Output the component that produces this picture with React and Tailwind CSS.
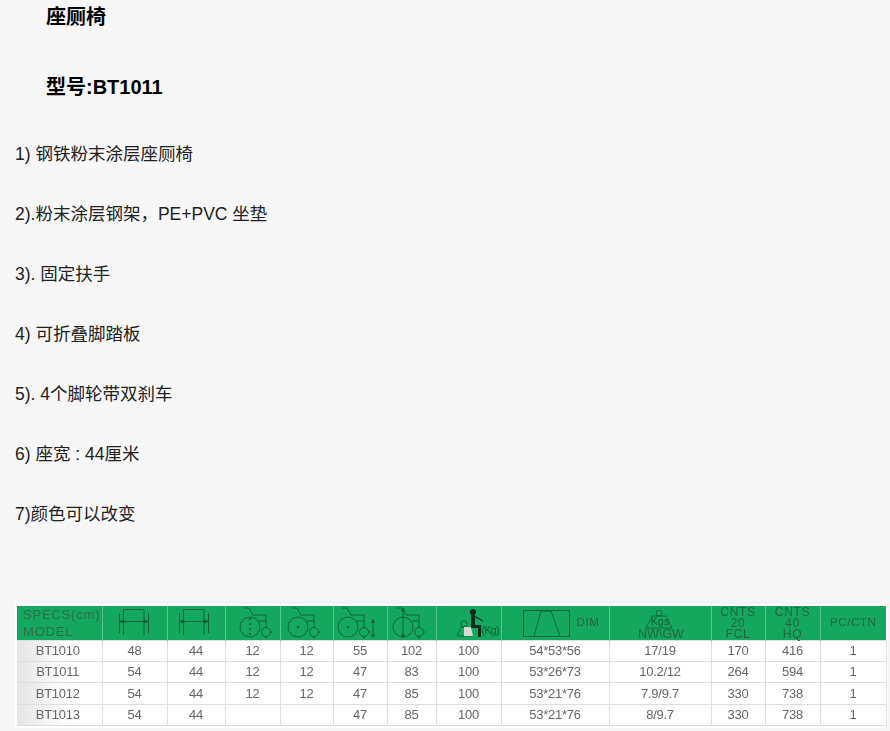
const features = [
  "1) 钢铁粉末涂层座厕椅",
  "2).粉末涂层钢架，PE+PVC 坐垫",
  "3). 固定扶手",
  "4) 可折叠脚踏板",
  "5). 4个脚轮带双刹车",
  "6) 座宽 : 44厘米",
  "7)颜色可以改变",
];

const rows = [
  ["BT1010", "48", "44", "12", "12", "55", "102", "100", "54*53*56", "17/19", "170", "416", "1"],
  ["BT1011", "54", "44", "12", "12", "47", "83", "100", "53*26*73", "10.2/12", "264", "594", "1"],
  ["BT1012", "54", "44", "12", "12", "47", "85", "100", "53*21*76", "7.9/9.7", "330", "738", "1"],
  ["BT1013", "54", "44", "", "", "47", "85", "100", "53*21*76", "8/9.7", "330", "738", "1"],
];

const rowHeights = ["h-[21px]", "h-[21px]", "h-[22px]", "h-[21px]"];

const SeatIcon = ({ className }) => (
  <svg width="30" height="28" viewBox="0 0 30 28" fill="none" stroke="#0f5c36" strokeWidth="0.9" className={`block ${className}`}>
    <path d="M4.5 0.5H25M4.5 0.5V26M25 0.5V26" />
    <path d="M0.5 4V24M29.5 4V24" />
    <path d="M1 12.5H29" />
    <path d="M1 12.5L5 11V14ZM29 12.5L25 11V14Z" fill="#0f5c36" />
  </svg>
);

const ChairIcon = ({ children, className, width = 34 }) => (
  <svg width={width} height="32" viewBox={`0 0 ${width} 32`} fill="none" stroke="#0f5c36" strokeWidth="0.9" className={`block ${className}`}>
    <path d="M5 1H10L14 8H27V21" />
    <path d="M20 14H27" />
    <circle cx="11" cy="20" r="10" />
    <circle cx="27" cy="25" r="4.5" />
    <path d="M31.5 25H33.5" />
    <path d="M27 29V31.5" strokeWidth="1.6" />
    {children}
  </svg>
);

const SitterIcon = () => (
  <svg width="30" height="30" viewBox="0 0 30 30" className="block" fill="none">
    <circle cx="9" cy="16" r="3.2" stroke="#0f5c36" strokeWidth="0.9" />
    <path d="M2 28L6 19H13L17 28Z" stroke="#0f5c36" strokeWidth="0.9" />
    <path d="M9 19H16L18 28H9Z" fill="#d5dbd6" />
    <circle cx="18" cy="4" r="3" fill="#0b2d1c" />
    <path d="M16 6.5H20V17H26V29H23V20H16Z" fill="#0b2d1c" />
    <path d="M19 8L28 13" stroke="#0b2d1c" strokeWidth="1.4" />
  </svg>
);

const HeaderStack = ({ lines }) => (
  <div className="flex flex-col items-center text-[12px] leading-[11px] tracking-[0.7px] text-[#26613f]">
    {lines.map((line) => (
      <span key={line}>{line}</span>
    ))}
  </div>
);

const cols = [85, 65, 58, 55, 53, 54, 49, 65, 108, 102, 54, 55, 66];

export default function App() {
  return (
    <div className="w-[890px] h-[731px] overflow-hidden bg-[#f7f7f7] text-black font-['Liberation_Sans','Noto_Sans_CJK_SC',sans-serif]">
      <h1 className="pl-[46px] pt-[5px] text-[20px] leading-[24px] font-bold">座厕椅</h1>
      <h2 className="pl-[46px] mt-[46px] text-[20px] leading-[24px] font-bold">型号:BT1011</h2>
      <div className="mt-[44px] pl-[15px] flex flex-col gap-[38px]">
        {features.map((item) => (
          <p key={item} className="text-[17.5px] leading-[22px] text-[#222]">{item}</p>
        ))}
      </div>

      <div className="mt-[79px] ml-[15px] w-[873px] bg-white p-[2px] blur-[0.3px]">
        <table className="table-fixed border-collapse w-[869px] text-[13px] tracking-[-0.25px] text-[#666] font-['Liberation_Sans',sans-serif]">
          <colgroup>
            {cols.map((w, i) => (
              <col key={i} style={{ width: w }} />
            ))}
          </colgroup>
          <thead>
            <tr className="h-[34px] bg-[#14a760]">
              <th className="border-r border-[#5cc48f] pl-[6px] text-left font-normal text-[13px] leading-[17px] tracking-[0.8px] text-[#2e6a4a]">
                SPECS(cm)<br />MODEL
              </th>
              <th className="border-r border-[#5cc48f] p-0"><SeatIcon className="ml-[16px]" /></th>
              <th className="border-r border-[#5cc48f] p-0"><SeatIcon className="ml-[11px]" /></th>
              <th className="border-r border-[#5cc48f] p-0">
                <ChairIcon className="ml-[13px]"><path d="M11 11V30" strokeDasharray="2 3" strokeWidth="1.6" /></ChairIcon>
              </th>
              <th className="border-r border-[#5cc48f] p-0">
                <ChairIcon className="ml-[6px]"><circle cx="11" cy="20" r="0.9" fill="#0f5c36" /></ChairIcon>
              </th>
              <th className="border-r border-[#5cc48f] p-0">
                <ChairIcon className="ml-[3px]" width={40}>
                  <circle cx="11" cy="20" r="0.9" fill="#0f5c36" />
                  <path d="M36 13V30M34.5 15.5L36 12.5L37.5 15.5ZM34.5 27.5L36 30.5L37.5 27.5Z" fill="#0f5c36" />
                </ChairIcon>
              </th>
              <th className="border-r border-[#5cc48f] p-0">
                <ChairIcon className="ml-[4px]"><path d="M11 2V30M9.5 4L11 1L12.5 4ZM9.5 28L11 31L12.5 28Z" fill="#0f5c36" /></ChairIcon>
              </th>
              <th className="border-r border-[#5cc48f] p-0">
                <div className="flex items-end pl-[18px]">
                  <SitterIcon />
                  <span className="-ml-[3px] mb-[2px] text-[10.5px] leading-[11px] tracking-[-0.6px] font-normal text-[#0f5c36]">(Kg)</span>
                </div>
              </th>
              <th className="border-r border-[#5cc48f] p-0">
                <div className="flex items-center pl-[21px] gap-[7px]">
                  <svg width="47" height="27" viewBox="0 0 47 27" fill="none" stroke="#0f5c36" strokeWidth="0.9" className="block">
                    <rect x="0.5" y="0.5" width="46" height="26" />
                    <path d="M11 26L18 1H28L37 26" />
                  </svg>
                  <span className="text-[11.5px] font-normal tracking-[0.6px] text-[#26613f]">DIM</span>
                </div>
              </th>
              <th className="border-r border-[#5cc48f] p-0">
                <div className="relative h-[33px] w-full">
                  <svg width="32" height="21" viewBox="0 0 32 21" fill="none" stroke="#0f5c36" strokeWidth="0.8" className="absolute left-[33px] top-[2px]">
                    <circle cx="16" cy="4" r="3" />
                    <path d="M9 7H23L29 19H3Z" />
                  </svg>
                  <span className="absolute left-0 right-0 top-[9px] text-center text-[10.5px] leading-[10px] tracking-[0.2px] font-normal text-[#0f5c36]">Kgs</span>
                  <span className="absolute left-[2px] right-0 bottom-[0px] text-center text-[12.5px] leading-[12px] tracking-[0px] font-normal text-[#26613f]">NW\GW</span>
                </div>
              </th>
              <th className="border-r border-[#5cc48f] p-0 font-normal"><HeaderStack lines={["CNTS", "20", "FCL"]} /></th>
              <th className="border-r border-[#5cc48f] p-0 font-normal"><HeaderStack lines={["CNTS", "40", "HQ"]} /></th>
              <th className="p-0 font-normal text-[11.5px] tracking-[0.6px] text-[#26613f]">PC/CTN</th>
            </tr>
          </thead>
          <tbody>
            {rows.map((row, r) => (
              <tr key={row[0]} className={`${rowHeights[r]} bg-white`}>
                {row.map((cell, c) => (
                  <td
                    key={c}
                    className={
                      c === 0
                        ? "border border-l-0 border-[#dedede] bg-gradient-to-r from-[#e6e6e6] to-white to-60% p-0 pr-[3px] text-center"
                        : "border border-[#dedede] p-0 text-center"
                    }
                  >
                    {cell}
                  </td>
                ))}
              </tr>
            ))}
          </tbody>
        </table>
      </div>
    </div>
  );
}
